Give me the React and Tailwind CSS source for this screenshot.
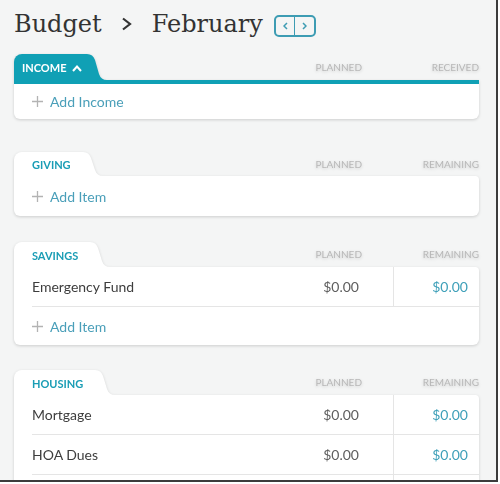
import React from 'react';

const sections = [
  { name: 'GIVING', mt: 'mt-[33px]', rows: [], add: 'Add Item', h: 24 },
  {
    name: 'SAVINGS',
    mt: 'mt-[26px]',
    rows: [{ label: 'Emergency Fund', planned: '$0.00', remaining: '$0.00' }],
    add: 'Add Item',
    h: 25,
  },
  {
    name: 'HOUSING',
    mt: 'mt-[25px]',
    rows: [
      { label: 'Mortgage', planned: '$0.00', remaining: '$0.00' },
      { label: 'HOA Dues', planned: '$0.00', remaining: '$0.00' },
      // next row only shows its lines before the frame cuts it off
      { label: '', planned: '', remaining: '' },
    ],
    add: null,
    h: 25,
  },
];

function TabCurve({ fill, h }) {
  return (
    <svg width="20" height={h} viewBox={`0 0 20 ${h}`} className="block shrink-0">
      <path d={`M0 0 Q6 0 8 6 L12 ${h - 6} Q14 ${h} 20 ${h} L0 ${h} Z`} fill={fill} />
    </svg>
  );
}

function Plus() {
  return (
    <svg width="11" height="11" viewBox="0 0 11 11" className="shrink-0">
      <path d="M5.5 0v11M0 5.5h11" stroke="#b3b3b3" strokeWidth="1.3" />
    </svg>
  );
}

function AddRow({ label, h }) {
  return (
    <div className={`flex items-center gap-[7px] pl-[18px] ${h}`}>
      <Plus />
      <span className="text-[14px] text-[#4a9fb9]">{label}</span>
    </div>
  );
}

function HeaderCols({ last }) {
  return (
    <div className="flex flex-1 items-center justify-end text-[10px] text-[#b7b7b7]">
      <span className="mr-[31px]">PLANNED</span>
      <span className="w-[86px] text-right">{last}</span>
    </div>
  );
}

function Row({ row }) {
  return (
    <div className="ml-[18px] flex h-[40px] border-b border-[#e5e5e5] text-[14px]">
      <div className="flex flex-1 items-center text-[#3d3d3d]">{row.label}</div>
      <div className="flex items-center pr-[34px] text-[#5e5e5e]">{row.planned}</div>
      <div className="flex w-[86px] items-center justify-end border-l border-[#e5e5e5] pr-[11px] text-[#3fa0b9]">
        {row.remaining}
      </div>
    </div>
  );
}

function IncomeCard() {
  return (
    <div className="mt-[14px] w-[465px] drop-shadow-[0_1px_1.5px_rgba(0,0,0,0.16)]">
      <div className="flex h-[26px]">
        <div className="flex items-center gap-[6px] rounded-tl-[8px] bg-[#10a0b5] pl-[8px] pr-[5px] pt-[2px]">
          <span className="text-[11px] font-bold text-white">INCOME</span>
          <svg width="10" height="7" viewBox="0 0 10 7">
            <path d="M1 6l4-4.5L9 6" fill="none" stroke="#fff" strokeWidth="2" />
          </svg>
        </div>
        <TabCurve fill="#10a0b5" h={26} />
        <HeaderCols last="RECEIVED" />
      </div>
      <div className="h-[4px] bg-[#10a0b5]" />
      <div className="rounded-b-[6px] bg-white">
        <AddRow label="Add Income" h="h-[35px]" />
      </div>
    </div>
  );
}

function Section({ s }) {
  return (
    <div className={`${s.mt} w-[465px] drop-shadow-[0_1px_1.5px_rgba(0,0,0,0.16)]`}>
      <div className="flex" style={{ height: s.h }}>
        <div className="flex items-center rounded-tl-[8px] bg-white pl-[18px] pr-[12px] pt-[3px]">
          <span className="text-[11px] font-bold text-[#1a9db5]">{s.name}</span>
        </div>
        <TabCurve fill="#ffffff" h={s.h} />
        <HeaderCols last="REMAINING" />
      </div>
      <div className="rounded-tr-[4px] rounded-b-[6px] bg-white">
        {s.rows.map((r, i) => (
          <Row key={i} row={r} />
        ))}
        {s.add && <AddRow label={s.add} h={s.rows.length ? 'h-[38px]' : 'h-[40px]'} />}
      </div>
    </div>
  );
}

export default function App() {
  return (
    <div className="h-[484px] w-[500px] bg-white font-['Lato',sans-serif]">
      <div className="h-[482px] w-[498px] overflow-hidden border-b-2 border-r-2 border-[#3c3c3c] bg-[#f4f5f5] pl-[14px] pt-[8px]">
        <div className="flex h-[32px] items-center text-[#333]">
          <span className="font-['DejaVu_Serif',serif] text-[24px] leading-none">Budget</span>
          <svg width="12" height="14" viewBox="0 0 12 14" className="ml-[19px] mr-[19px]">
            <path d="M2 1.5l7 5.5-7 5.5" fill="none" stroke="#333" strokeWidth="2.2" />
          </svg>
          <span className="font-['DejaVu_Serif',serif] text-[24px] leading-none">February</span>
          <div className="ml-[11px] mt-[4px] flex h-[22px] w-[42px] rounded-[5px] border-2 border-[#3d9cb3]">
            <button className="flex flex-1 items-center justify-center border-r-[1.5px] border-[#3d9cb3]">
              <svg width="5" height="8" viewBox="0 0 5 8">
                <path d="M4 1L1 4l3 3" fill="none" stroke="#3d9cb3" strokeWidth="1.5" />
              </svg>
            </button>
            <button className="flex flex-1 items-center justify-center">
              <svg width="5" height="8" viewBox="0 0 5 8">
                <path d="M1 1l3 3-3 3" fill="none" stroke="#3d9cb3" strokeWidth="1.5" />
              </svg>
            </button>
          </div>
        </div>
        <IncomeCard />
        {sections.map((s) => (
          <Section key={s.name} s={s} />
        ))}
      </div>
    </div>
  );
}
